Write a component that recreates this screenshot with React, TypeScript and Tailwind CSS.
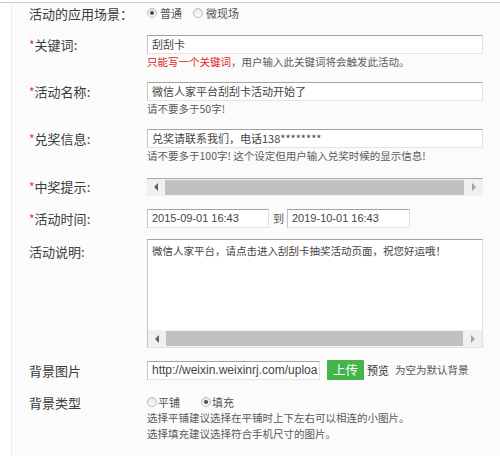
import React from 'react';

const cjk = { fontFamily: '"Noto Sans CJK SC", "Noto Sans", sans-serif' };
const latin = { fontFamily: '"Liberation Sans", "Noto Sans CJK SC", sans-serif' };

const inputBox =
  'h-[19px] bg-white border border-t-[#a2a2a2] border-l-[#c4c4c4] border-r-[#e0e0e0] border-b-[#e4e4e4] pl-[4px] flex items-center text-[11px] leading-[17px] text-[#444] overflow-hidden whitespace-nowrap';

function Label({ text, req, colon = true }: { text: string; req?: boolean; colon?: boolean }) {
  return (
    <div className="w-[118px] shrink-0 text-[13px] leading-[19px] text-[#3c3c3c]" style={cjk}>
      {req && <span className="text-[#e03a3a] text-[12px]">*</span>}
      {text}
      {colon && ':'}
    </div>
  );
}

function Radio({ checked }: { checked?: boolean }) {
  return (
    <span className="w-[10px] h-[10px] rounded-full border border-[#b9b9b9] bg-gradient-to-b from-[#e6e6e6] to-[#fdfdfd] flex items-center justify-center shrink-0">
      {checked && <span className="w-[4px] h-[4px] rounded-full bg-[#4a4a4a]" />}
    </span>
  );
}

function HScroll({ className = '' }: { className?: string }) {
  return (
    <div className={`h-[17px] flex bg-[#f0f0f0] ${className}`}>
      <div className="w-[18px] flex items-center justify-center">
        <span className="w-0 h-0 border-y-[4px] border-y-transparent border-r-[4px] border-r-[#606060]" />
      </div>
      <div className="flex-1 bg-[#c1c1c1] my-[1px]" />
      <div className="w-[19px] flex items-center justify-center">
        <span className="w-0 h-0 border-y-[4px] border-y-transparent border-l-[4px] border-l-[#a3a3a3]" />
      </div>
    </div>
  );
}

function Hint({ children }: { children: React.ReactNode }) {
  return (
    <div className="text-[10.5px] leading-[16px] text-[#5a5a5a] whitespace-nowrap" style={cjk}>
      {children}
    </div>
  );
}

export default function App() {
  return (
    <div className="w-[500px] h-[456px] bg-white overflow-hidden pt-[2px]">
      <div className="h-full border-t border-[#c9c9c9] pl-[11px]">
        <div className="h-full border-l border-[#ececec] bg-[#fbfbfb] pl-[17px] flex flex-col">
          {/* 应用场景 */}
          <div className="flex h-[20px] items-center">
            <div className="w-[118px] shrink-0 text-[13px] leading-[19px] text-[#3c3c3c]" style={cjk}>
              活动的应用场景：
            </div>
            <div className="flex items-center text-[11px] text-[#555]" style={cjk}>
              <Radio checked />
              <span className="ml-[3px]">普通</span>
              <span className="ml-[11px]"><Radio /></span>
              <span className="ml-[3px]">微现场</span>
            </div>
          </div>

          {/* 关键词 */}
          <div className="flex mt-[12px]">
            <Label text="关键词" req />
            <div className="w-[336px]">
              <div className={inputBox} style={cjk}>刮刮卡</div>
              <Hint>
                <span className="text-[#e2231a]">只能写一个关键词</span>，用户输入此关键词将会触发此活动。
              </Hint>
            </div>
          </div>

          {/* 活动名称 */}
          <div className="flex mt-[12px]">
            <Label text="活动名称" req />
            <div className="w-[336px]">
              <div className={inputBox} style={cjk}>微信人家平台刮刮卡活动开始了</div>
              <Hint>请不要多于50字!</Hint>
            </div>
          </div>

          {/* 兑奖信息 */}
          <div className="flex mt-[12px]">
            <Label text="兑奖信息" req />
            <div className="w-[336px]">
              <div className={inputBox} style={cjk}>兑奖请联系我们，电话138********</div>
              <Hint>请不要多于100字! 这个设定但用户输入兑奖时候的显示信息!</Hint>
            </div>
          </div>

          {/* 中奖提示 */}
          <div className="flex mt-[13px] items-center">
            <Label text="中奖提示" req />
            <div className="w-[336px] border-t border-[#a8a8a8]">
              <HScroll />
            </div>
          </div>

          {/* 活动时间 */}
          <div className="flex mt-[13px] items-center">
            <Label text="活动时间" req />
            <div className={`${inputBox} w-[122px]`} style={latin}>2015-09-01 16:43</div>
            <span className="ml-[4px] mr-[3px] text-[11px] text-[#555]" style={cjk}>到</span>
            <div className={`${inputBox} w-[123px]`} style={latin}>2019-10-01 16:43</div>
          </div>

          {/* 活动说明 */}
          <div className="flex mt-[11px]">
            <div className="pt-[3px]">
              <Label text="活动说明" />
            </div>
            <div className="w-[336px] h-[109px] bg-white border border-t-[#a2a2a2] border-l-[#c4c4c4] border-r-[#e0e0e0] border-b-[#e4e4e4] flex flex-col">
              <div className="flex-1 pl-[4px] pt-[3px] text-[10.5px] leading-[16px] text-[#444]" style={cjk}>
                微信人家平台，请点击进入刮刮卡抽奖活动页面，祝您好运哦！
              </div>
              <HScroll />
            </div>
          </div>

          {/* 背景图片 */}
          <div className="flex mt-[12px] items-center">
            <div className="w-[118px] shrink-0 text-[13px] leading-[19px] text-[#3c3c3c]" style={cjk}>背景图片</div>
            <div className={`${inputBox} w-[173px] text-[12px] text-[#333]`} style={latin}>
              http://weixin.weixinrj.com/uploa
            </div>
            <button
              className="ml-[7px] w-[37px] h-[20px] bg-[#44b549] text-white text-[12.5px] leading-[20px] rounded-[1px]"
              style={cjk}
            >
              上传
            </button>
            <span className="ml-[3px] text-[11px] text-[#333]" style={cjk}>预览</span>
            <span className="ml-[6px] text-[10.5px] text-[#555]" style={cjk}>为空为默认背景</span>
          </div>

          {/* 背景类型 */}
          <div className="flex mt-[14px]">
            <div className="w-[118px] shrink-0 text-[13px] leading-[19px] text-[#3c3c3c] -mt-[1px]" style={cjk}>背景类型</div>
            <div>
              <div className="flex items-center h-[16px] text-[11px] text-[#555]" style={cjk}>
                <Radio />
                <span className="ml-[1px]">平铺</span>
                <span className="ml-[21px]"><Radio checked /></span>
                <span className="ml-[1px]">填充</span>
              </div>
              <Hint>选择平铺建议选择在平铺时上下左右可以相连的小图片。</Hint>
              <Hint>选择填充建议选择符合手机尺寸的图片。</Hint>
            </div>
          </div>
        </div>
      </div>
    </div>
  );
}
